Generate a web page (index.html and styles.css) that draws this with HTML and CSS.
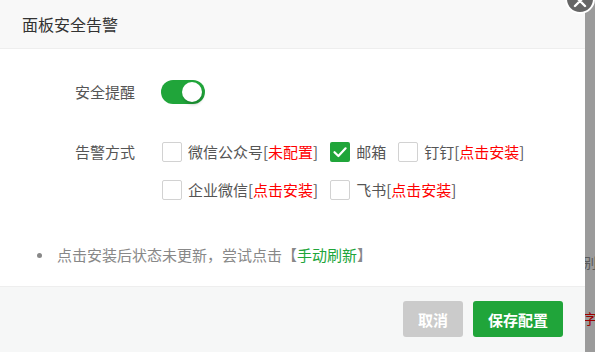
FILE: index.html
```html
<!DOCTYPE html>
<html lang="zh-CN">
<head>
<meta charset="utf-8">
<title>面板安全告警</title>
<link rel="stylesheet" href="styles.css">
</head>
<body>
<div class="page">
  <div class="dialog">
    <div class="dlg-head">面板安全告警</div>
    <div class="dlg-body">
      <div class="form-row row-switch">
        <div class="form-label">安全提醒</div>
        <div class="switch on"><span class="knob"></span></div>
      </div>
      <div class="form-row row-methods">
        <div class="form-label label-methods">告警方式</div>
        <div class="methods">
          <div class="method-line">
            <label class="method"><span class="cbox"></span><span class="mtext">微信公众号[<em class="warn">未配置</em>]</span></label>
            <label class="method"><span class="cbox checked"><svg viewBox="0 0 20 20" width="20" height="20"><path d="M4.5 10.2 L8.4 14 L15.6 6.3" fill="none" stroke="#fff" stroke-width="2.2" stroke-linecap="round" stroke-linejoin="round"/></svg></span><span class="mtext">邮箱</span></label>
            <label class="method"><span class="cbox"></span><span class="mtext">钉钉[<em class="warn">点击安装</em>]</span></label>
          </div>
          <div class="method-line">
            <label class="method"><span class="cbox"></span><span class="mtext">企业微信[<em class="warn">点击安装</em>]</span></label>
            <label class="method"><span class="cbox"></span><span class="mtext">飞书[<em class="warn">点击安装</em>]</span></label>
          </div>
        </div>
      </div>
      <ul class="tips">
        <li>点击安装后状态未更新，尝试点击【<a class="link">手动刷新</a>】</li>
      </ul>
    </div>
    <div class="dlg-foot">
      <button class="btn btn-cancel">取消</button>
      <button class="btn btn-save">保存配置</button>
    </div>
    <span class="close-btn"><svg viewBox="0 0 30 30" width="30" height="30"><path d="M10 12 L15 17 M20 12 L15 17 M10 22 L15 17 M20 22 L15 17" stroke="#fff" stroke-width="2.4" stroke-linecap="round"/></svg></span>
  </div>
  <div class="backdrop">
    <span class="bg-gray">别</span>
    <span class="bg-red">字</span>
  </div>
</div>
</body>
</html>
```

FILE: styles.css
```css
* { box-sizing: border-box; }
html, body { margin: 0; padding: 0; }
body {
  width: 595px;
  height: 352px;
  overflow: hidden;
  background: #9b9b9b;
  font-family: "Noto Sans CJK SC", "Noto Sans", sans-serif;
}
.page {
  display: flex;
  height: 352px;
}
.dialog {
  position: relative;
  width: 585px;
  flex: 0 0 585px;
  height: 352px;
  background: #fff;
  display: flex;
  flex-direction: column;
}
.dlg-head {
  height: 49px;
  line-height: 48px;
  padding-left: 22px;
  font-size: 16px;
  color: #333;
  background: #f8f8f8;
  border-bottom: 1px solid #eee;
}
.dlg-body {
  height: 237px;
  padding-top: 31px;
}
.form-row {
  display: flex;
  align-items: flex-start;
}
.form-label {
  width: 161px;
  padding-left: 75px;
  font-size: 15px;
  color: #555;
  line-height: 24px;
}
.label-methods {
  line-height: 20px;
}
.row-methods { margin-top: 38px; }
.switch {
  position: relative;
  width: 44px;
  height: 24px;
  border-radius: 12px;
  background: #20a53a;
}
.knob {
  position: absolute;
  right: 3px;
  top: 2px;
  width: 20px;
  height: 20px;
  border-radius: 50%;
  background: #fff;
  box-shadow: 1px 3px 3px rgba(0,0,0,0.18);
}
.methods {
  display: flex;
  flex-direction: column;
  gap: 18px;
}
.method-line {
  display: flex;
  gap: 12px;
  padding-left: 1px;
}
.method {
  display: flex;
  align-items: center;
  gap: 6px;
  height: 20px;
  font-size: 15px;
  color: #555;
}
.cbox {
  width: 20px;
  height: 20px;
  flex: 0 0 20px;
  border: 1px solid #d2d2d2;
  border-radius: 2px;
  background: #fff;
}
.cbox.checked {
  border: none;
  background: #20a53a;
}
.cbox svg { display: block; }
.mtext { white-space: nowrap; line-height: 20px; }
.warn { font-style: normal; color: #f00; }
.tips {
  margin: 45px 0 0 0;
  padding: 0 0 0 37px;
  list-style: none;
}
.tips li {
  position: relative;
  padding-left: 20px;
  font-size: 15px;
  line-height: 20px;
  color: #888;
}
.tips li::before {
  content: "";
  position: absolute;
  left: 0;
  top: 8px;
  width: 5px;
  height: 5px;
  border-radius: 50%;
  background: #888;
}
.link { color: #20a53a; }
.dlg-foot {
  flex: 1;
  background: #f6f7f7;
  border-top: 1px solid #eee;
  display: flex;
  justify-content: flex-end;
  align-items: flex-start;
  gap: 10px;
  padding: 14px 22px 0 0;
}
.btn {
  height: 36px;
  border: none;
  border-radius: 3px;
  color: #fff;
  font-family: "Noto Sans CJK SC", sans-serif;
  font-size: 15px;
  font-weight: bold;
  padding: 0;
}
.btn-cancel { width: 60px; background: #cbcbcb; }
.btn-save { width: 90px; background: #20a53a; }
.close-btn {
  position: absolute;
  left: 565px;
  top: -16px;
  width: 30px;
  height: 30px;
  border-radius: 50%;
  background: #666;
  border: 2px solid #fff;
  z-index: 2;
}
.close-btn svg { display: block; margin: -2px; }
.backdrop {
  flex: 1;
  overflow: hidden;
  position: relative;
}
.bg-gray, .bg-red {
  position: absolute;
  left: -2px;
  font-size: 14px;
  line-height: 20px;
}
.bg-gray { top: 252px; color: #5a5a5a; }
.bg-red { top: 308px; color: #9a0000; }
```
